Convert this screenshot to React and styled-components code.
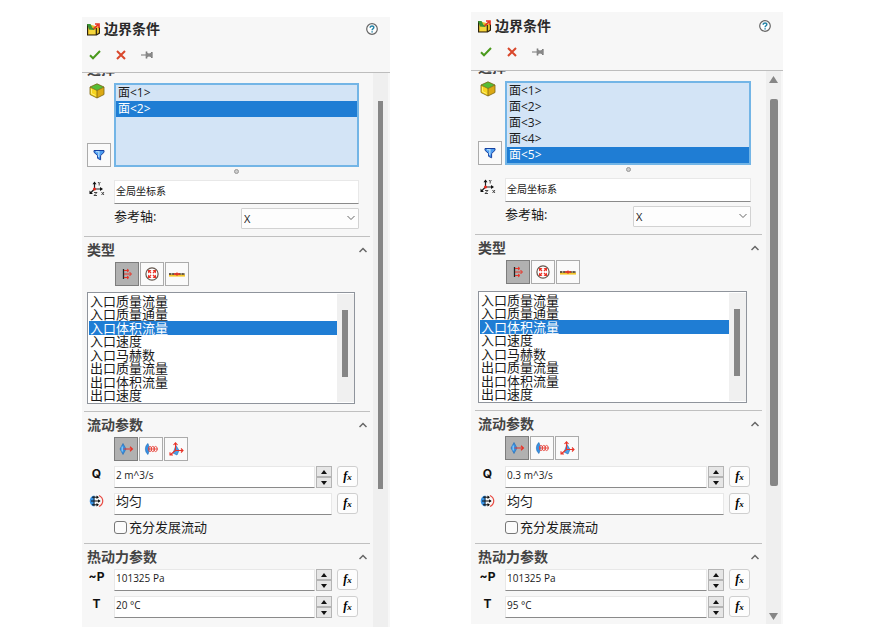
import { useId, useState } from 'react'
import styled, { createGlobalStyle, css } from 'styled-components'

const GlobalStyle = createGlobalStyle`
    * {
        box-sizing: border-box;
    }

    body {
        margin: 0;
        background: #fff;
        color: #1a1a1a;
        font-family: "Open Sans", "Noto Sans CJK SC", sans-serif;
        font-size: 13px;
    }

    button, input, select {
        margin: 0;
        font-family: inherit;
        color: inherit;
    }
`;

const Page = styled.main`
    display: grid;
    grid-template-columns: minmax(0, 308fr) minmax(0, 312fr);
    align-items: start;
    gap: 81px;
    padding: 12px 90px 5px 82px;
`;

const Panel = styled.section`
    background: #f7f7f7;
    margin-top: ${props => props.$wide ? '0' : '5px'};
`;

const PanelHeader = styled.header`
    padding: ${props => props.$wide ? '2px 0 4px 2px' : '0 0 3px'};
    border-bottom: 1px solid #bdbdbd;
`;

const TitleRow = styled.div`
    display: flex;
    align-items: center;
    height: 24px;
    padding: 0 12px 0 5px;
`;

const Title = styled.h1`
    flex: 1;
    margin: 0 0 0 4px;
    color: #2a2a2a;
    font-size: 14px;
    font-weight: 700;
    line-height: 20px;
`;

const PlainButton = styled.button`
    display: flex;
    align-items: center;
    justify-content: center;
    padding: 0;
    border: none;
    background: none;
    cursor: pointer;
`;

const ActionRow = styled.div`
    display: flex;
    height: 28px;

    ${PlainButton} {
        width: 26px;
    }
`;

const PanelBody = styled.div`
    display: grid;
    grid-template-columns: minmax(0, 1fr) 17px;
`;

const Content = styled.div`
    padding: ${props => props.$wide ? '0 4px 6px' : '0 3px 9px 2px'};
`;

const Section = styled.section`
    padding: 0 11px 7px 3px;

    & + & {
        border-top: 1px solid #c0c0c0;
    }

    &:last-child {
        padding-bottom: 0;
    }
`;

const CutHeading = styled.h2`
    display: flex;
    align-items: flex-end;
    height: 6px;
    margin: 0 0 4px;
    overflow: hidden;
    color: #444;
    font-size: 14px;
    line-height: 20px;
`;

const SectionHead = styled.div`
    display: flex;
    align-items: center;
    justify-content: space-between;
    height: 25px;
    margin-right: -8px;

    h2 {
        margin: 0;
        color: #444;
        font-size: 14px;
        line-height: 20px;
    }
`;

const PickArea = styled.div`
    display: grid;
    grid-template-columns: 27px minmax(0, 1fr);
`;

const PickTools = styled.div`
    display: flex;
    flex-direction: column;
    justify-content: space-between;

    > svg {
        margin-left: 2px;
    }
`;

const ToolButton = styled.button`
    display: flex;
    align-items: center;
    justify-content: center;
    width: 24px;
    height: 24px;
    padding: 0;
    border: 1px solid ${props => props.$active ? '#7d7d7d' : '#ababab'};
    background: ${props => props.$active ? '#b1b1b1' : '#fafafa'};
    cursor: pointer;
`;

const FaceList = styled.ul`
    height: 84px;
    margin: 0;
    padding: 0;
    border: 2px solid #73b5e6;
    background: #d3e4f6;
    list-style: none;
    font-size: 12px;
    line-height: 16px;
`;

const selected = css`
    background: #1f7dd4;
    color: #fff;
`;

const Face = styled.li`
    height: 16px;
    padding-left: 2px;
    cursor: default;
    ${props => props.$selected && selected}
`;

const Grip = styled.div`
    display: flex;
    align-items: center;
    justify-content: center;
    height: 13px;
    margin-left: 27px;
    padding-bottom: 5px;

    span {
        width: 5px;
        height: 5px;
        border: 1px solid #999;
        border-radius: 50%;
        background: #ccc;
    }
`;

const Row = styled.div`
    display: flex;
    padding-right: ${props => props.$flush ? '0' : '1px'};

    & + & {
        margin-top: 5px;
    }
`;

const RowLabel = styled.label`
    display: flex;
    flex: 0 0 27px;
    align-items: center;
    justify-content: center;
    padding: 0 8px 7px 0;
    color: #111;
    font-family: Inter, sans-serif;
    font-size: 12px;
    font-weight: 700;
    line-height: 14px;
`;

const Field = styled.input`
    flex: 1;
    min-width: 0;
    height: ${props => props.$tall ? '24px' : '22px'};
    padding: ${props => props.$large ? '0 1px 8px' : '0 1px 4px'};
    border: 1px solid #e8e8e8;
    border-bottom-color: #8a8a8a;
    border-radius: 0;
    outline: none;
    background: #fff;
    font-size: ${props => props.$large ? '13px' : '10px'};
`;

const Spinner = styled.div`
    display: grid;
    grid-template-rows: 1fr 1fr;
    width: 16px;
    height: 22px;
    margin-left: 1px;

    button {
        display: flex;
        align-items: center;
        justify-content: center;
        padding: 0;
        border: 1px solid #b4b4b4;
        background: #e6e6e6;
    }
`;

const FxButton = styled.button`
    width: 21px;
    height: 21px;
    margin-left: 5px;
    padding: 0;
    border: 1px solid #cfcfcf;
    border-radius: 3px;
    background: #fdfdfd;
    color: #000;
    font: italic bold 12px/16px "Liberation Serif", serif;

    small {
        font-size: 9px;
    }
`;

const AxisRow = styled.div`
    display: flex;
    justify-content: space-between;
    margin-top: 4px;
    padding-left: 27px;

    label {
        line-height: 16px;
    }
`;

const SelectWrap = styled.div`
    position: relative;
    width: 118px;
    height: 21px;

    svg {
        position: absolute;
        top: 7px;
        right: 4px;
        pointer-events: none;
    }
`;

const Select = styled.select`
    width: 100%;
    height: 100%;
    padding: 0 2px;
    appearance: none;
    border: 1px solid #d2d2d2;
    border-radius: 1px;
    outline: none;
    background: #fdfdfd;
    font-size: 11px;
`;

const ToolRow = styled.div`
    display: flex;
    gap: 1px;
    margin: 0 0 ${props => props.$after}px ${props => props.$indent}px;
`;

const TypeBox = styled.div`
    display: grid;
    grid-template-columns: minmax(0, 1fr) 17px;
    height: 112px;
    margin-right: 4px;
    padding: 1px 0 1px 1px;
    border: 1px solid #8f949c;
    background: #fff;
`;

const TypeList = styled.ul`
    display: grid;
    grid-auto-rows: minmax(0, 1fr);
    min-height: 0;
    margin: 0;
    padding: 0;
    list-style: none;
`;

const TypeItem = styled.li`
    display: flex;
    align-items: center;
    padding-left: 1px;
    line-height: 12px;
    cursor: default;
    ${props => props.$selected && selected}
`;

const TypeTrack = styled.div`
    padding: 16px 6px 0 5px;
    background: #f0f0f0;

    div {
        height: 67px;
        background: #868686;
    }
`;

const CheckRow = styled.label`
    display: flex;
    align-items: center;
    gap: 2px;
    height: 20px;
    margin: 2px 0 -1px 27px;
    line-height: 18px;

    input {
        width: 13px;
        height: 13px;
        appearance: none;
        border: 1px solid #777;
        border-radius: 3px;
        background: #fbfbfb;
    }

    input:checked {
        background: #1f7dd4;
    }
`;

const Gutter = styled.div`
    display: flex;
    flex-direction: column;
    align-items: center;
    margin-right: 2px;
    background: #efefef;
`;

const GutterEnd = styled.div`
    display: flex;
    flex: ${props => props.$last ? '1 0 0' : '0 0 28px'};
    align-items: ${props => props.$last ? 'flex-end' : 'flex-start'};
    padding: 5px 0 4px;
`;

const Thumb = styled.div`
    flex: 0 0 70%;
    width: ${props => props.$wide ? '8px' : '5px'};
    border-radius: ${props => props.$wide ? '2px' : '0'};
    background: #868686;
`;

const Arrow = ({ down, size = 5, color = '#111' }) => (
    <svg width={size} height={size - 2} viewBox="0 0 6 4" preserveAspectRatio="none">
        <path d={down ? 'M0 0h6L3 4z' : 'M0 4h6L3 0z'} fill={color} />
    </svg>
)

const Chevron = ({ down }) => (
    <svg width="8" height="6" viewBox="0 0 8 6">
        <path d={down ? 'M0.5 1L4 4.5L7.5 1' : 'M0.5 5L4 1.5L7.5 5'} fill="none" stroke="#666" strokeWidth={down ? 1 : 1.5} />
    </svg>
)

const ConditionIcon = () => (
    <svg width="13" height="13" viewBox="0 0 13 13">
        <path d="M0.5 1v11h9l3-2V4" fill="#e8bf2a" stroke="#2b210c" strokeWidth="1.2" />
        <path d="M2 7l7-1v5H2z" fill="#f5d63c" />
        <path d="M9.3 5v7" stroke="#2b210c" strokeWidth="1.2" />
        <path d="M0 1h3.5l2 4L9 4.5 7 7 2 6.5z" fill="#3a9436" />
        <path d="M6.5 6L11 1.8M8 1h4v4" fill="none" stroke="#e83425" strokeWidth="1.7" />
    </svg>
)

const HelpIcon = () => (
    <svg width="12" height="12" viewBox="0 0 12 12">
        <circle cx="6" cy="6" r="5.3" fill="#fff" stroke="#666" strokeWidth="1.2" />
        <path d="M4.2 4.7C4.2 2.3 8 2.5 7.8 4.6 7.7 5.8 6.1 5.8 6.1 7.3M6.1 8.2v1.4" fill="none" stroke="#2584a8" strokeWidth="1.5" />
    </svg>
)

const CheckIcon = () => (
    <svg width="12" height="10" viewBox="0 0 12 10">
        <path d="M1 5.3l3 3L11 1" fill="none" stroke="#4a9a1c" strokeWidth="2" />
    </svg>
)

const CrossIcon = () => (
    <svg width="10" height="10" viewBox="0 0 10 10">
        <path d="M1 1l8 8M9 1L1 9" fill="none" stroke="#d9472b" strokeWidth="2" />
    </svg>
)

const PinIcon = () => (
    <svg width="12" height="8" viewBox="0 0 12 8">
        <path d="M0 4h5" stroke="#8a8a8a" strokeWidth="1.2" />
        <path d="M5.5 0.5v7M10.8 1v6" stroke="#777" strokeWidth="1.6" />
        <path d="M5 1.5l3 1 3-1v5L8 5.5 5 6.5z" fill="#888" />
    </svg>
)

const CubeIcon = () => (
    <svg width="16" height="16" viewBox="0 0 16 16">
        <path d="M1 4l7 3.5V15L1 11.5z" fill="#f7d51f" />
        <path d="M15 4L8 7.5V15l7-3.5z" fill="#dca914" />
        <path d="M8 .8L15 4 8 7.5 1 4z" fill="#55bd36" />
        <path d="M8 .8L15 4v7.5L8 15l-7-3.5V4zM1 4l7 3.5L15 4M8 7.5V15" fill="none" stroke="#7c6610" strokeWidth=".8" />
        <path d="M2.5 6v4.5L6.5 12.5" fill="none" stroke="#fff17a" strokeWidth=".9" />
    </svg>
)

const FilterIcon = () => (
    <svg width="12" height="12" viewBox="0 0 12 12">
        <path d="M1 1.5h10v1.8L7.6 6.6v4.2L4.6 9.3V6.6L1 3.3z" fill="#4b9cf0" stroke="#1741a0" strokeWidth="1" />
        <path d="M3 2.7h3L5.7 8" fill="none" stroke="#c9ebff" strokeWidth="1.1" />
    </svg>
)

const AxesIcon = () => (
    <svg width="16" height="16" viewBox="0 0 16 16">
        <path d="M5.5 8V1.5M5.5 8h7M5.5 8L1.5 12" fill="none" stroke="#222" strokeWidth="1.2" />
        <path d="M3.5 3.2l2-2.7 2 2.7zM11 6l3 2-3 2zM0.5 9.5V13H4z" fill="#111" />
        <circle cx="5.5" cy="8" r="1.5" fill="#e8261c" />
        <path d="M9 1l1.2 1.5L11.4 1M10.2 2.5V4.5M5 11.5h3L5 14.5h3M12.5 11l2.5 3M15 11l-2.5 3" fill="none" stroke="#333" strokeWidth=".9" />
    </svg>
)

const FlowTypeIcon = () => (
    <svg width="12" height="12" viewBox="0 0 12 12">
        <path d="M2.5 1v10" stroke="#222" strokeWidth="1.3" />
        <path d="M3 2.5h4M3 6h7M3 9.5h4M6 1l2 1.5L6 4M8.5 4l2 2-2 2M6 8l2 1.5L6 11" fill="none" stroke="#e93227" strokeWidth="1" />
    </svg>
)

const PressureIcon = () => (
    <svg width="14" height="14" viewBox="0 0 14 14">
        <circle cx="7" cy="7" r="6.1" fill="#fff" stroke="#66584f" strokeWidth="1.2" />
        <path d="M6 6L3.5 3.5M8 6l2.5-2.5M6 8l-2.5 2.5M8 8l2.5 2.5" stroke="#e93227" strokeWidth="1.4" />
        <path d="M3 6.5V3h3.5zM7.5 3H11v3.5zM3 7.5V11h3.5zM11 7.5V11H7.5z" fill="#e93227" />
    </svg>
)

const WallIcon = () => (
    <svg width="16" height="5" viewBox="0 0 16 5">
        <path d="M0 3.6h16" stroke="#f5c628" strokeWidth="2" />
        <path d="M0 2h16" stroke="#3b2a18" strokeWidth="1.4" strokeDasharray="2.5 .6" />
        <path d="M5 2h6M8 .5v3.2" stroke="#e93227" strokeWidth="1.3" />
    </svg>
)

const NormalIcon = () => (
    <svg width="15" height="14" viewBox="0 0 15 14">
        <path d="M4 1.5L7 7l-3 5.5L1 7z" fill="#3791e2" stroke="#2069b5" strokeWidth=".6" />
        <path d="M3.2 4.5v5" stroke="#8fd0ff" strokeWidth="1.2" />
        <path d="M4.5 7H13M11 4.8L13.4 7 11 9.2" fill="none" stroke="#e93227" strokeWidth="1.2" />
    </svg>
)

const SwirlIcon = () => (
    <svg width="15" height="14" viewBox="0 0 15 14">
        <path d="M4 1.5C.5 4 .5 10 4 12.5L5.5 7z" fill="#3791e2" stroke="#2069b5" strokeWidth=".6" />
        <g fill="none" stroke="#e8453c" strokeWidth=".9">
            <ellipse cx="6" cy="7" rx="1.6" ry="2.6" />
            <ellipse cx="8.8" cy="7" rx="1.6" ry="2.6" />
            <ellipse cx="11.6" cy="7" rx="1.6" ry="2.6" />
            <path d="M5 7h9" />
        </g>
    </svg>
)

const VectorIcon = () => (
    <svg width="15" height="15" viewBox="0 0 15 15">
        <path d="M7 3.5l3 5-2 4.5-4-2z" fill="#4aa0e8" stroke="#2069b5" strokeWidth=".6" />
        <path d="M6.5 8.5V1M4.5 3l2-2.2L8.5 3M6.5 8.5H14M12 6.5l2 2-2 2M6.5 8.5L1 13M1 10.3V13h3" fill="none" stroke="#e93227" strokeWidth="1.1" />
    </svg>
)

const ProfileIcon = () => (
    <svg width="15" height="14" viewBox="0 0 15 14">
        <path d="M5.5 1.5C-.8 2-.8 12 5.5 12.5z" fill="#3791e2" />
        <path d="M10 1.5c5 2.5 5 8.5 0 11" fill="none" stroke="#e84a42" strokeWidth="1.2" />
        <path d="M3 3.2h6M2 7h8.5M3 10.8h6" fill="none" stroke="#111" strokeWidth="1" />
        <path d="M7.5 1.4L10 3.2 7.5 5zM9 5.2L11.7 7 9 8.8zM7.5 9l2.5 1.8-2.5 1.8z" fill="#111" />
        <path d="M5 2v10" stroke="#111" strokeWidth=".8" />
    </svg>
)

const flowTypes = ['入口质量流量', '入口质量通量', '入口体积流量', '入口速度', '入口马赫数', '出口质量流量', '出口体积流量', '出口速度'];

function Head({ children }) {
    return (
        <SectionHead>
            <h2>{children}</h2>
            <PlainButton type="button" aria-label="collapse"><Chevron /></PlainButton>
        </SectionHead>
    )
}

function Fx() {
    return <FxButton type="button">f<small>x</small></FxButton>
}

function NumberRow({ label, initial }) {
    const id = useId();
    const [value, setValue] = useState(initial);

    const step = (amount) => {
        setValue(value.replace(/^[\d.]+/, n => String(Number(n) + amount)));
    }

    return (
        <Row>
            <RowLabel htmlFor={id}>{label}</RowLabel>
            <Field id={id} type="text" value={value} onChange={e => setValue(e.target.value)} />
            <Spinner>
                <button type="button" aria-label="up" onClick={() => step(1)}><Arrow size={6} /></button>
                <button type="button" aria-label="down" onClick={() => step(-1)}><Arrow down size={6} /></button>
            </Spinner>
            <Fx />
        </Row>
    )
}

function Tools({ icons, indent, after }) {
    const [active, setActive] = useState(0);

    return (
        <ToolRow $indent={indent} $after={after}>
            {icons.map(([name, Icon], i) => (
                <ToolButton key={name} type="button" aria-label={name} $active={i === active} onClick={() => setActive(i)}>
                    <Icon />
                </ToolButton>
            ))}
        </ToolRow>
    )
}

function BoundaryPanel({ faces, flow, temperature, wide }) {
    const id = useId();
    const [face, setFace] = useState(faces - 1);
    const [type, setType] = useState(2);

    return (
        <Panel $wide={wide}>
            <PanelHeader $wide={wide}>
                <TitleRow>
                    <ConditionIcon />
                    <Title>边界条件</Title>
                    <PlainButton type="button" aria-label="help"><HelpIcon /></PlainButton>
                </TitleRow>
                <ActionRow>
                    <PlainButton type="button" aria-label="ok"><CheckIcon /></PlainButton>
                    <PlainButton type="button" aria-label="cancel"><CrossIcon /></PlainButton>
                    <PlainButton type="button" aria-label="pin"><PinIcon /></PlainButton>
                </ActionRow>
            </PanelHeader>
            <PanelBody>
                <Content $wide={wide}>
                    <Section>
                        <CutHeading>选择</CutHeading>
                        <PickArea>
                            <PickTools>
                                <CubeIcon />
                                <ToolButton type="button" aria-label="filter"><FilterIcon /></ToolButton>
                            </PickTools>
                            <FaceList role="listbox">
                                {Array.from({ length: faces }, (_, i) => (
                                    <Face key={i} role="option" aria-selected={i === face} $selected={i === face} onClick={() => setFace(i)}>
                                        {`面<${i + 1}>`}
                                    </Face>
                                ))}
                            </FaceList>
                        </PickArea>
                        <Grip><span /></Grip>
                        <Row $flush>
                            <RowLabel htmlFor={`${id}-system`} aria-label="coordinate system"><AxesIcon /></RowLabel>
                            <Field id={`${id}-system`} $tall type="text" defaultValue="全局坐标系" />
                        </Row>
                        <AxisRow>
                            <label htmlFor={`${id}-axis`}>参考轴:</label>
                            <SelectWrap>
                                <Select id={`${id}-axis`} defaultValue="X">
                                    <option>X</option>
                                    <option>Y</option>
                                    <option>Z</option>
                                </Select>
                                <Chevron down />
                            </SelectWrap>
                        </AxisRow>
                    </Section>

                    <Section>
                        <Head>类型</Head>
                        <Tools
                            icons={[['flow', FlowTypeIcon], ['pressure', PressureIcon], ['wall', WallIcon]]}
                            indent={28}
                            after={wide ? 7 : 6}
                        />
                        <TypeBox>
                            <TypeList role="listbox">
                                {flowTypes.map((name, i) => (
                                    <TypeItem key={name} role="option" aria-selected={i === type} $selected={i === type} onClick={() => setType(i)}>
                                        {name}
                                    </TypeItem>
                                ))}
                            </TypeList>
                            <TypeTrack><div /></TypeTrack>
                        </TypeBox>
                    </Section>

                    <Section>
                        <Head>流动参数</Head>
                        <Tools
                            icons={[['normal', NormalIcon], ['swirl', SwirlIcon], ['vector', VectorIcon]]}
                            indent={27}
                            after={wide ? 6 : 5}
                        />
                        <NumberRow label="Q" initial={flow} />
                        <Row>
                            <RowLabel htmlFor={`${id}-profile`} aria-label="profile"><ProfileIcon /></RowLabel>
                            <Field id={`${id}-profile`} $large type="text" defaultValue="均匀" />
                            <Fx />
                        </Row>
                        <CheckRow>
                            <input type="checkbox" />
                            充分发展流动
                        </CheckRow>
                    </Section>

                    <Section>
                        <Head>热动力参数</Head>
                        <NumberRow label="~P" initial="101325 Pa" />
                        <NumberRow label="T" initial={temperature} />
                    </Section>
                </Content>
                <Gutter>
                    <GutterEnd>{wide && <Arrow size={9} color="#868686" />}</GutterEnd>
                    <Thumb $wide={wide} />
                    <GutterEnd $last>{wide && <Arrow down size={9} color="#868686" />}</GutterEnd>
                </Gutter>
            </PanelBody>
        </Panel>
    )
}

export default function App() {
    return (
        <>
            <GlobalStyle />
            <Page>
                <BoundaryPanel faces={2} flow="2 m^3/s" temperature="20 °C" />
                <BoundaryPanel faces={5} flow="0.3 m^3/s" temperature="95 °C" wide />
            </Page>
        </>
    )
};
